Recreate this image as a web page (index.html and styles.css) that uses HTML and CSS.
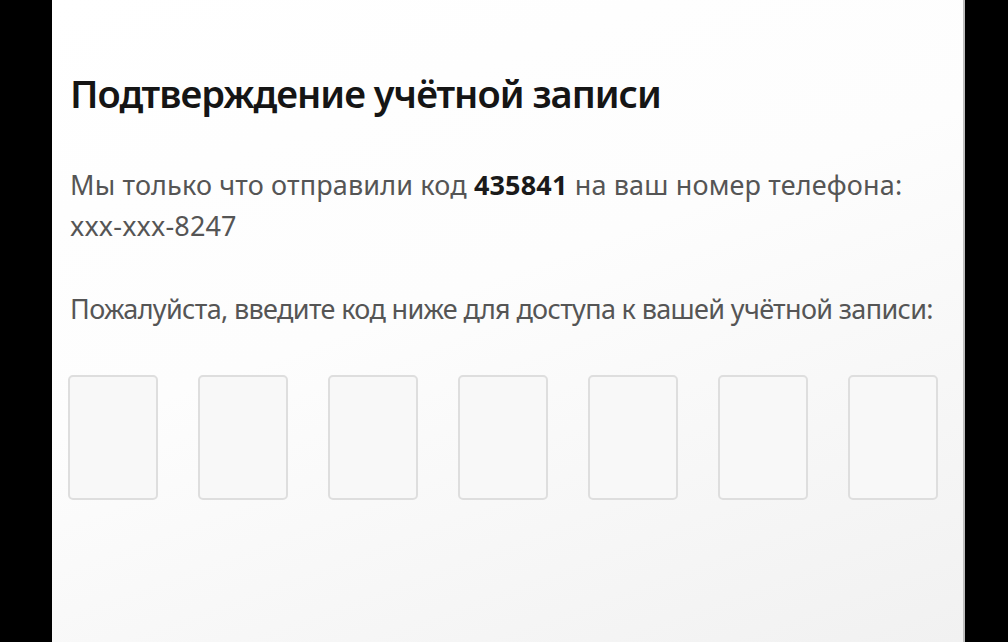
FILE: index.html
```html
<!DOCTYPE html>
<html lang="ru">
<head>
    <meta charset="UTF-8">
    <meta name="viewport" content="width=device-width, initial-scale=1.0">
    <title>Подтверждение учётной записи</title>
    <link rel="stylesheet" href="styles.css">
</head>
<body>
    <main class="verify-card">
        <h1>Подтверждение учётной записи</h1>

        <p class="sent-note">
            Мы только что отправили код <b>435841</b> на ваш номер телефона:<br>
            xxx-xxx-8247
        </p>

        <p class="prompt">Пожалуйста, введите код ниже для доступа к вашей учётной записи:</p>

        <!-- one box per digit -->
        <form class="code-row">
            <input type="text" maxlength="1" class="code-box">
            <input type="text" maxlength="1" class="code-box">
            <input type="text" maxlength="1" class="code-box">
            <input type="text" maxlength="1" class="code-box">
            <input type="text" maxlength="1" class="code-box">
            <input type="text" maxlength="1" class="code-box">
            <input type="text" maxlength="1" class="code-box">
        </form>
    </main>
</body>
</html>
```

FILE: styles.css
```css
html, body {
    height: 100%;
}

body {
    margin: 0;
    padding: 0 43px 0 52px;
    background: #000;
    font-family: 'Noto Sans', 'Open Sans', sans-serif;
    overflow: hidden;
}

.verify-card {
    height: 100%;
    box-sizing: border-box;
    padding: 70px 24px 0 16px;
    background: linear-gradient(160deg, #ffffff 0%, #fdfdfd 45%, #f1f1f1 100%);
    border-right: 2px solid #bdbdbd;
}

.verify-card h1 {
    margin: 0 0 0 2px;
    font-size: 38px;
    line-height: 46px;
    font-weight: 600;
    color: #151515;
    letter-spacing: -1px;
}

.sent-note {
    margin: 48px 0 0 2px;
    font-size: 27px;
    line-height: 41px;
    color: #555;
    letter-spacing: 0.15px;
}

.sent-note b {
    color: #1a1a1a;
}

.prompt {
    margin: 42px 0 0 2px;
    font-size: 27px;
    line-height: 41px;
    color: #555;
    letter-spacing: -0.65px;
}

.code-row {
    display: flex;
    gap: 40px;
    margin-top: 46px;
}

.code-box {
    width: 90px;
    height: 125px;
    box-sizing: border-box;
    padding: 0;
    border: 2px solid #dedede;
    border-radius: 5px;
    background: #f8f8f8;
}
```
